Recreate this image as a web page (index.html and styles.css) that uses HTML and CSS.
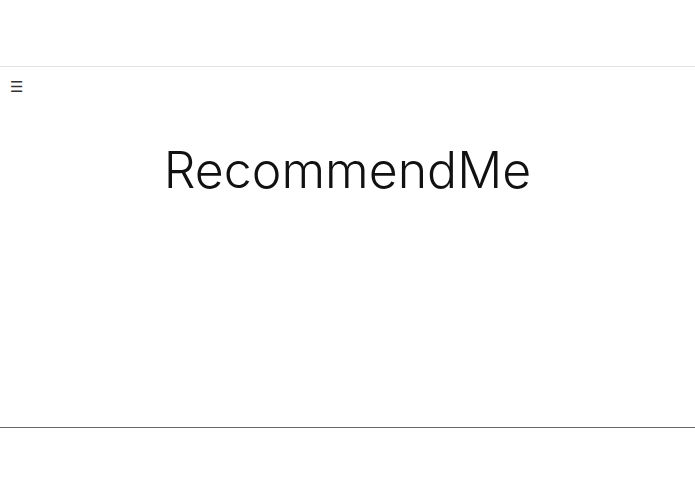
FILE: index.html
```html
<!DOCTYPE html>
<html>
<head>
<meta charset="utf-8">
<link rel="stylesheet" href="styles.css">
</head>
<body>
<header class="topbar"></header>
<nav class="menu"><span class="burger">☰</span></nav>
<main class="hero">
  <h1 class="title">RecommendMe</h1>
</main>
<footer class="footer"></footer>
</body>
</html>
```
FILE: styles.css
```css
html, body { margin: 0; padding: 0; background: #fff; }
body { font-family: "DejaVu Sans", sans-serif; color: #111; }
.topbar { height: 66px; border-bottom: 1px solid #e3e3e3; }
.menu { height: 40px; display: flex; align-items: center; padding-left: 10px; }
.burger { font-size: 15px; color: #333; line-height: 1; margin-top: 1px; }
.hero { height: 320px; border-bottom: 1px solid #666; display: flex; justify-content: center; align-items: flex-start; }
.title { margin: 33px 0 0; font-family: "Inter", sans-serif; font-weight: 300; font-size: 50px; letter-spacing: 0; color: #111; line-height: 1.2; }
.footer { height: 66px; }
```
